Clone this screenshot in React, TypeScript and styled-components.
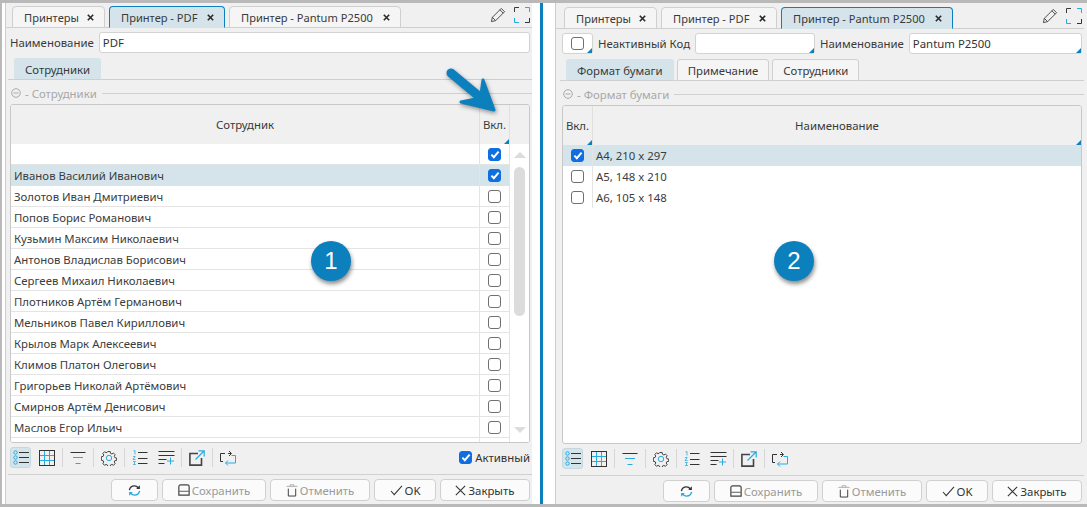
import React from "react";
import styled, { createGlobalStyle } from "styled-components";

const GlobalStyle = createGlobalStyle`
  html, body { margin: 0; padding: 0; background: #fff; }
  body { font-family: "Noto Sans", "Open Sans", sans-serif; font-size: 11.4px; color: #333; }
`;

const ACCENT = "#0c7fbd";
const SKY = "#29abe2";

const Page = styled.div`
  position: relative;
  box-sizing: border-box;
  width: 1087px;
  height: 507px;
  overflow: hidden;
  display: grid;
  grid-template-columns: 527px 23px 532px;
  padding-left: 3px;
  border-top: 3px solid #b9b9b9;
  border-bottom: 3px solid #b9b9b9;
  border-left: 2px solid #b9b9b9;
`;

const Panel = styled.section<{ $right?: boolean }>`
  background: #f0f0f0;
  display: flex;
  flex-direction: column;
  min-width: 0;
  height: 501px;
  box-sizing: border-box;
  padding: ${(p) => (p.$right ? "0 5px 0 6px" : "0 2px 0 4px")};
  border-left: 1px solid #cdcdcd;
`;

const Divider = styled.div`
  display: flex;
  padding-left: 8px;
  &::before {
    content: "";
    width: 3px;
    background: ${ACCENT};
  }
`;

const TopBar = styled.div<{ $right?: boolean }>`
  height: ${(p) => (p.$right ? 25 : 24)}px;
  display: flex;
  align-items: flex-end;
  gap: 4px;
  padding: ${(p) => (p.$right ? "0 2px 0 8px" : "0 2px 0 6px")};
  margin: ${(p) => (p.$right ? "0 -2px 0 -6px" : "0 -2px 0 -4px")};
  border-bottom: 1px solid #cfcfcf;
`;

const Tab = styled.div<{ $active?: boolean; $width: number }>`
  width: ${(p) => p.$width}px;
  height: 22px;
  box-sizing: border-box;
  display: flex;
  align-items: center;
  justify-content: space-between;
  padding: 0 10px 0 11px;
  margin-bottom: -1px;
  white-space: nowrap;
  background: ${(p) => (p.$active ? "#d4e4ea" : "#f5f5f5")};
  border: 1px solid ${(p) => (p.$active ? ACCENT : "#cfcfcf")};
  border-bottom: 1px solid ${(p) => (p.$active ? "#d4e4ea" : "#cfcfcf")};
  border-radius: 4px 4px 0 0;
  color: #3a3a3a;
`;

const TabName = styled.span`
  font-size: 11.1px;
`;

const TopTools = styled.div`
  margin-left: auto;
  display: flex;
  align-items: center;
  gap: 8px;
  height: 24px;
`;

const FormRow = styled.div`
  height: 21px;
  margin-top: 4px;
  display: flex;
  align-items: center;
  gap: 5px;
`;

const Label = styled.span`
  white-space: nowrap;
  color: #3a3a3a;
`;

const Corner = `
  &::after {
    content: "";
    position: absolute;
    right: 0;
    bottom: 0;
    border-style: solid;
    border-width: 0 0 5px 5px;
    border-color: transparent transparent ${ACCENT} transparent;
  }
`;

const Input = styled.div<{ $width?: number; $corner?: boolean; $centered?: boolean }>`
  position: relative;
  box-sizing: border-box;
  height: 21px;
  flex: ${(p) => (p.$width ? `0 0 ${p.$width}px` : "1")};
  background: #fff;
  border: 1px solid #d3d3d3;
  border-radius: 3px;
  padding: 0 3px;
  display: flex;
  align-items: center;
  justify-content: ${(p) => (p.$centered ? "center" : "flex-start")};
  color: #333;
  ${(p) => p.$corner && Corner}
`;

const SubTabs = styled.div`
  height: 21px;
  margin: 5px -2px 0;
  display: flex;
  align-items: flex-end;
  gap: 3px;
  padding-left: 6px;
  border-bottom: 1px solid #cfcfcf;
`;

const SubTab = styled.div<{ $active?: boolean }>`
  height: 22px;
  box-sizing: border-box;
  display: flex;
  align-items: center;
  padding: 0 10px;
  margin-bottom: -1px;
  background: ${(p) => (p.$active ? "#d4e4ea" : "#f5f5f5")};
  border: 1px solid ${(p) => (p.$active ? "#d4e4ea" : "#cfcfcf")};
  border-bottom: 1px solid #cfcfcf;
  border-radius: 3px 3px 0 0;
  color: #3a3a3a;
`;

const GroupTitle = styled.div`
  height: 14px;
  margin: 6px -2px 0 0;
  display: flex;
  align-items: center;
  gap: 4px;
  color: #a8a8a8;
  padding-left: 1px;
  &::after {
    content: "";
    flex: 1;
    height: 1px;
    background: #d0d0d0;
    margin-left: 1px;
  }
`;

const GridBox = styled.div`
  margin-top: 4px;
  height: 339px;
  box-sizing: border-box;
  background: #fff;
  border: 1px solid #c8c8c8;
  border-radius: 3px;
  overflow: hidden;
  position: relative;
  display: flex;
  flex-direction: column;
`;

const GridRowBase = styled.div<{ $cols: string }>`
  display: grid;
  grid-template-columns: ${(p) => p.$cols};
`;

const HeaderRow = styled(GridRowBase)`
  height: 39px;
  background: #f0f0f0;
  flex: none;
`;

const HeaderCell = styled.div<{ $corner?: boolean; $line?: boolean }>`
  position: relative;
  display: flex;
  align-items: center;
  justify-content: center;
  color: #3a3a3a;
  ${(p) => p.$line && "border-right: 1px solid #e0e0e0;"}
  ${(p) => p.$corner && Corner}
`;

const Body = styled.div`
  position: relative;
  flex: 1;
  overflow: hidden;
`;

const DataRow = styled(GridRowBase)<{ $selected?: boolean; $lined?: boolean }>`
  height: 21px;
  box-sizing: border-box;
  background: ${(p) => (p.$selected ? "#d4e4ea" : "#fff")};
  border-bottom: ${(p) => (p.$lined ? "1px solid #e4e4e4" : "none")};
`;

const Cell = styled.div<{ $line?: boolean }>`
  display: flex;
  align-items: center;
  padding: 0 3px;
  white-space: nowrap;
  overflow: hidden;
  color: #3c3c3c;
  ${(p) => p.$line && "border-right: 1px solid #e4e4e4;"}
`;

const CheckCell = styled(Cell)`
  justify-content: center;
  padding: 0;
`;

const Box = styled.span<{ $checked?: boolean }>`
  width: 13px;
  height: 13px;
  flex: none;
  box-sizing: border-box;
  border-radius: 3px;
  border: 1px solid ${(p) => (p.$checked ? "#0f6fe0" : "#707070")};
  background: ${(p) => (p.$checked ? "#0f6fe0" : "#fff")};
  display: inline-flex;
  align-items: center;
  justify-content: center;
`;

const Scrollbar = styled.div`
  position: absolute;
  top: 0;
  right: 0;
  bottom: 0;
  width: 19px;
  background: #fff;
  display: flex;
  flex-direction: column;
  align-items: center;
  padding-top: 8px;
  box-sizing: border-box;
`;

const ArrowUp = styled.span`
  border-style: solid;
  border-width: 0 6.5px 6px 6.5px;
  border-color: transparent transparent #dcdcdc transparent;
`;

const ArrowDown = styled.span`
  border-style: solid;
  border-width: 6px 6.5px 0 6.5px;
  border-color: #dcdcdc transparent transparent transparent;
  margin-top: auto;
  margin-bottom: 9px;
`;

const Thumb = styled.div`
  width: 11px;
  height: 149px;
  margin-top: 9px;
  background: #dcdcdc;
  border-radius: 5.5px;
`;

const Toolbar = styled.div`
  height: 21px;
  margin-top: 4px;
  display: flex;
  align-items: center;
`;

const ToolButton = styled.div<{ $active?: boolean }>`
  width: 21px;
  height: 21px;
  flex: none;
  margin-right: 5px;
  box-sizing: border-box;
  display: flex;
  align-items: flex-start;
  justify-content: flex-start;
  padding: 2px 0 0 2px;
  border-radius: 3px;
  background: ${(p) => (p.$active ? "#d4e4ea" : "transparent")};
  border: 1px solid ${(p) => (p.$active ? "#c6d8df" : "transparent")};
  svg { flex: none; }
`;

const ToolSep = styled.span`
  width: 1px;
  height: 19px;
  flex: none;
  background: #d6d6d6;
  margin-right: 4px;
`;

const ActiveCheck = styled.label`
  margin-left: auto;
  display: flex;
  align-items: center;
  gap: 3px;
  color: #333;
`;

const Footer = styled.div`
  margin: 6px -2px 0;
  padding: 4px 2px 0 0;
  border-top: 1px solid #d0d0d0;
  display: flex;
  justify-content: flex-end;
  gap: 4px;
`;

const Button = styled.div<{ $width: number; $muted?: boolean }>`
  width: ${(p) => p.$width}px;
  height: 22px;
  box-sizing: border-box;
  background: #fbfbfb;
  border: 1px solid #d0d0d0;
  border-radius: 4px;
  display: flex;
  align-items: center;
  justify-content: center;
  gap: 2px;
  color: ${(p) => (p.$muted ? "#9a9a9a" : "#333")};
`;

const Badge = styled.div<{ $x: number }>`
  position: absolute;
  left: ${(p) => p.$x}px;
  top: 238px;
  width: 40px;
  height: 40px;
  border-radius: 50%;
  background: ${ACCENT};
  color: #fff;
  font-family: "Liberation Sans", sans-serif;
  font-size: 24px;
  display: flex;
  align-items: center;
  justify-content: center;
  box-shadow: 1px 3px 4px rgba(0, 0, 0, 0.45);
`;

const ArrowMark = styled.svg`
  position: absolute;
  left: 439px;
  top: 60px;
  filter: drop-shadow(1px 2px 2px rgba(0, 0, 0, 0.4));
`;

const Close = () => (
  <svg width="7" height="7" viewBox="0 0 7 7">
    <path d="M.8.8l5.400 5.400M6.200.8.800 6.200" stroke="#2a2a2a" strokeWidth="1.600" />
  </svg>
);

const Collapse = () => (
  <svg width="10" height="10" viewBox="0 0 10 10">
    <circle cx="5" cy="5" r="4.300" fill="none" stroke="#aaa" />
    <path d="M2.500 5h5" stroke="#aaa" />
  </svg>
);

const Tick = () => (
  <svg width="10" height="9" viewBox="0 0 11 10">
    <path d="M1.500 5.200 4.200 8 9.500 1.800" fill="none" stroke="#fff" strokeWidth="2.200" />
  </svg>
);

const Pencil = () => (
  <svg width="16" height="16" viewBox="0 0 17 17" fill="none" stroke="#444">
    <path d="M1.500 15.500 2.500 11 12 1.500 15.500 5 6 14.500Z" />
    <path d="M10.500 3 14 6.500M2.500 11 6 14.500" />
  </svg>
);

const Expand = () => (
  <svg width="16" height="16" viewBox="0 0 16 16" fill="none">
    <path d="M.5 5V.5H5" stroke="#3a3a3a" />
    <path d="M11 .5h4.500V5" stroke={SKY} />
    <path d="M.5 11v4.500H5" stroke={SKY} />
    <path d="M11 15.500h4.500V11" stroke="#333" />
  </svg>
);

const ListIcon = () => (
  <svg width="17" height="15" viewBox="0 0 17 15" fill="none">
    <g stroke={SKY}>
      <circle cx="2.500" cy="2.500" r="1.700" />
      <circle cx="2.500" cy="7.500" r="1.700" />
      <circle cx="2.500" cy="12.500" r="1.700" />
    </g>
    <path d="M6 2.500h10M6 7.500h10M6 12.500h10" stroke="#333" strokeWidth="1.200" />
  </svg>
);

const TableIcon = () => (
  <svg width="16" height="16" viewBox="0 0 16 16" fill="none">
    <path d="M5.500 1v14M10.500 1v14M1 5.500h14M1 10.500h14" stroke={SKY} />
    <rect x=".5" y=".5" width="15" height="15" stroke="#333" />
  </svg>
);

const FilterIcon = () => (
  <svg width="16" height="15" viewBox="0 0 16 15" fill="none">
    <path d="M.500 2.500h15" stroke="#333" />
    <path d="M3 7.500h10M5.500 13.500h5" stroke={SKY} />
  </svg>
);

const GearIcon = () => (
  <svg width="16" height="16" viewBox="0 0 16 16" fill="none">
    <path
      d="M6.700.8h2.600l.4 2 1.500.7 1.800-1 1.800 1.800-1 1.800.7 1.500 2 .4v2.600l-2 .4-.7 1.500 1 1.800-1.800 1.800-1.800-1-1.500.7-.4 2H6.700l-.4-2-1.500-.7-1.800 1-1.800-1.800 1-1.800-.7-1.500-2-.4V6.600l2-.4.700-1.500-1-1.800 1.800-1.800 1.800 1 1.500-.7z"
      transform="translate(.8 .8) scale(.9)"
      stroke="#333"
    />
    <circle cx="8" cy="8" r="2.700" stroke={SKY} />
  </svg>
);

const NumberedIcon = () => (
  <svg width="16" height="16" viewBox="0 0 16 16" fill="none">
    <path d="M1.500 1 3 .5v4M1 6.500h2.200L1 9.500h2.500M1 11.500h2.500L2 13l1.500 1.500H1" stroke={SKY} strokeWidth=".8" />
    <path d="M6 2.500h9.500M6 8.500h9.500M6 13.500h9.500" stroke="#333" />
  </svg>
);

const AddListIcon = () => (
  <svg width="17" height="15" viewBox="0 0 17 15" fill="none">
    <path d="M.500 1.500h16M.500 5.500h16M.500 9.500h8M.500 13.500h6" stroke="#333" />
    <path d="M12.500 7.500v7M9 11h7" stroke={SKY} />
  </svg>
);

const ExportIcon = () => (
  <svg width="16" height="16" viewBox="0 0 16 16" fill="none">
    <path d="M9 3.500H.900v11.600h11.600V8" stroke="#444" strokeWidth="1.600" />
    <path d="M6.500 9.500 15 1M9.500.800h5.700v5.700" stroke={SKY} strokeWidth="1.200" />
  </svg>
);

const SwapIcon = () => (
  <svg width="16" height="16" viewBox="0 0 16 16" fill="none">
    <path d="M5 3.500H.5v8H3M8 3.500h3M9 1 11.500 3.500 9 6" stroke="#333" />
    <path d="M11.500 5.500h4v7.500H5.500M8 10.500 5.500 13 8 15.500" stroke={SKY} />
  </svg>
);

const RefreshIcon = () => (
  <svg width="13" height="13" viewBox="0 0 14 13" fill="none">
    <path d="M1.500 6C2 3 4.500 1.500 7 1.500c1.700 0 3 .7 4 2" stroke="#333" strokeWidth="1.500" />
    <path d="M12.800.8v4h-4z" fill="#333" />
    <path d="M12.500 7C12 10 9.500 11.500 7 11.500c-1.700 0-3-.7-4-2" stroke={SKY} strokeWidth="1.500" />
    <path d="M1.200 12.200v-4h4z" fill={SKY} />
  </svg>
);

const SaveIcon = () => (
  <svg width="12" height="12" viewBox="0 0 14 14" fill="none" stroke="#444">
    <path d="M1 3a2 2 0 0 1 2-2h8a2 2 0 0 1 2 2v10H1z" strokeWidth="1.400" />
    <path d="M1.500 8.500h11" />
  </svg>
);

const TrashIcon = () => (
  <svg width="12" height="13" viewBox="0 0 13 14" fill="none">
    <path d="M.500 2.500h12M4.500 2.500V.800h4v1.700" stroke="#aaa" />
    <path d="M2.500 5v8h8V5" stroke="#333" />
  </svg>
);

const CheckIcon = () => (
  <svg width="13" height="11" viewBox="0 0 14 12" fill="none">
    <path d="M1 6.500 4.500 10.500 13 1" stroke="#333" strokeWidth="1.100" />
  </svg>
);

const CrossIcon = () => (
  <svg width="11" height="11" viewBox="0 0 13 13" fill="none">
    <path d="M1 1l11 11M12 1 1 12" stroke="#333" strokeWidth="1.300" />
  </svg>
);

const Tools = () => (
  <>
    <ToolButton $active><ListIcon /></ToolButton>
    <ToolButton><TableIcon /></ToolButton>
    <ToolSep />
    <ToolButton><FilterIcon /></ToolButton>
    <ToolSep />
    <ToolButton><GearIcon /></ToolButton>
    <ToolSep />
    <ToolButton><NumberedIcon /></ToolButton>
    <ToolButton><AddListIcon /></ToolButton>
    <ToolSep />
    <ToolButton><ExportIcon /></ToolButton>
    <ToolSep />
    <ToolButton><SwapIcon /></ToolButton>
  </>
);

const FooterButtons = () => (
  <Footer>
    <Button $width={47}><RefreshIcon /></Button>
    <Button $width={104} $muted><SaveIcon />Сохранить</Button>
    <Button $width={100} $muted><TrashIcon />Отменить</Button>
    <Button $width={62}><CheckIcon />OK</Button>
    <Button $width={90}><CrossIcon />Закрыть</Button>
  </Footer>
);

const PrinterTabs = ({ active }: { active: number }) => (
  <>
    <Tab $width={93} $active={active === 0}><TabName>Принтеры</TabName><Close /></Tab>
    <Tab $width={116} $active={active === 1}><TabName>Принтер - PDF</TabName><Close /></Tab>
    <Tab $width={172} $active={active === 2}><TabName>Принтер - Pantum P2500</TabName><Close /></Tab>
    <TopTools><Pencil /><Expand /></TopTools>
  </>
);

const employees = [
  "Иванов Василий Иванович",
  "Золотов Иван Дмитриевич",
  "Попов Борис Романович",
  "Кузьмин Максим Николаевич",
  "Антонов Владислав Борисович",
  "Сергеев Михаил Николаевич",
  "Плотников Артём Германович",
  "Мельников Павел Кириллович",
  "Крылов Марк Алексеевич",
  "Климов Платон Олегович",
  "Григорьев Николай Артёмович",
  "Смирнов Артём Денисович",
  "Маслов Егор Ильич",
];

const formats = ["А4, 210 x 297", "А5, 148 x 210", "А6, 105 x 148"];

const LEFT_COLS = "469px 30px 19px";
const RIGHT_COLS = "30px 1fr";

export default function App() {
  return (
    <Page>
      <GlobalStyle />
      <Panel>
        <TopBar>
          <PrinterTabs active={1} />
        </TopBar>
        <FormRow>
          <Label>Наименование</Label>
          <Input>PDF</Input>
        </FormRow>
        <SubTabs>
          <SubTab $active>Сотрудники</SubTab>
        </SubTabs>
        <GroupTitle><Collapse /> - Сотрудники</GroupTitle>
        <GridBox>
          <HeaderRow $cols={LEFT_COLS}>
            <HeaderCell $line>Сотрудник</HeaderCell>
            <HeaderCell $line $corner>Вкл.</HeaderCell>
            <HeaderCell />
          </HeaderRow>
          <Body>
            <DataRow $cols={LEFT_COLS} $lined>
              <Cell $line />
              <CheckCell $line><Box $checked><Tick /></Box></CheckCell>
            </DataRow>
            {employees.map((name, i) => (
              <DataRow key={name} $cols={LEFT_COLS} $selected={i === 0} $lined={i !== 0}>
                <Cell $line>{name}</Cell>
                <CheckCell $line>
                  <Box $checked={i === 0}>{i === 0 && <Tick />}</Box>
                </CheckCell>
              </DataRow>
            ))}
            <DataRow $cols={LEFT_COLS}>
              <Cell $line />
              <CheckCell $line />
            </DataRow>
            <Scrollbar>
              <ArrowUp />
              <Thumb />
              <ArrowDown />
            </Scrollbar>
          </Body>
        </GridBox>
        <Toolbar>
          <Tools />
          <ActiveCheck><Box $checked><Tick /></Box>Активный</ActiveCheck>
        </Toolbar>
        <FooterButtons />
      </Panel>
      <Divider />
      <Panel $right>
        <TopBar $right>
          <PrinterTabs active={2} />
        </TopBar>
        <FormRow>
          <Input $width={31} $corner $centered><Box /></Input>
          <Label>Неактивный Код</Label>
          <Input $width={120} $corner />
          <Label>Наименование</Label>
          <Input $corner>Pantum P2500</Input>
        </FormRow>
        <SubTabs>
          <SubTab $active>Формат бумаги</SubTab>
          <SubTab>Примечание</SubTab>
          <SubTab>Сотрудники</SubTab>
        </SubTabs>
        <GroupTitle><Collapse /> - Формат бумаги</GroupTitle>
        <GridBox>
          <HeaderRow $cols={RIGHT_COLS}>
            <HeaderCell $line $corner>Вкл.</HeaderCell>
            <HeaderCell $corner>Наименование</HeaderCell>
          </HeaderRow>
          <Body>
            {formats.map((name, i) => (
              <DataRow key={name} $cols={RIGHT_COLS} $selected={i === 0}>
                <CheckCell $line>
                  <Box $checked={i === 0}>{i === 0 && <Tick />}</Box>
                </CheckCell>
                <Cell>{name}</Cell>
              </DataRow>
            ))}
          </Body>
        </GridBox>
        <Toolbar><Tools /></Toolbar>
        <FooterButtons />
      </Panel>
      <ArrowMark width="66" height="56" viewBox="0 0 66 56">
        <path d="M10 10 46 40" stroke={ACCENT} strokeWidth="9" strokeLinecap="round" fill="none" />
        <path d="M42 17 53 47 20 39 35 36 40 31Z" fill={ACCENT} stroke={ACCENT} strokeWidth="3" strokeLinejoin="round" />
      </ArrowMark>
      <Badge $x={309}>1</Badge>
      <Badge $x={772}>2</Badge>
    </Page>
  );
}
